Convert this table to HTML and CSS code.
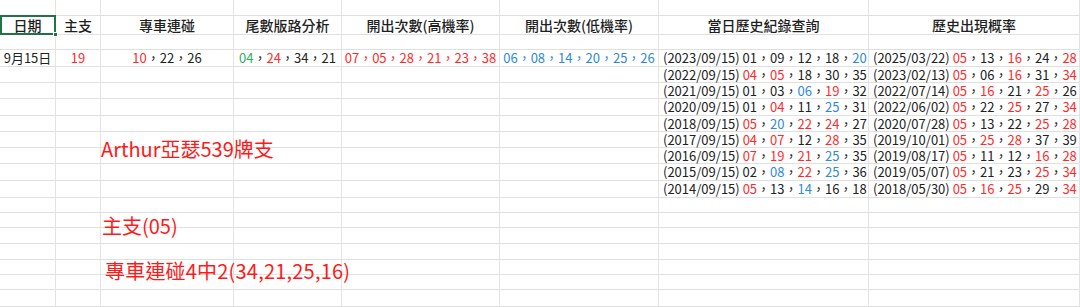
FILE: index.html
```html
<!DOCTYPE html>
<html lang="zh-Hant">
<head>
<meta charset="utf-8">
<title>Arthur亞瑟539牌支</title>
<link rel="stylesheet" href="styles.css">
</head>
<body>
<div class="sheet">
  <div class="row h16"><div></div><div></div><div></div><div></div><div></div><div></div><div></div><div></div></div>
  <div class="row h19 head">
    <div class="c selected">日期</div><div class="c">主支</div><div class="c">專車連碰</div><div class="c">尾數版路分析</div><div class="c">開出次數(高機率)</div><div class="c">開出次數(低機率)</div><div class="c">當日歷史紀錄查詢</div><div class="c">歷史出現概率</div>
  </div>
  <div class="row h15"><div></div><div></div><div></div><div></div><div></div><div></div><div></div><div></div></div>
  <div class="row h17">
    <div class="c">9月15日</div>
    <div class="c r">19</div>
    <div class="c"><span class="r">10</span>，22，26</div>
    <div class="c"><span class="g">04</span>，<span class="r">24</span>，34，21</div>
    <div class="c r">07，05，28，21，23，38</div>
    <div class="c b">06，08，14，20，25，26</div>
    <div class="l">(2023/09/15) 01，09，12，18，<span class="b">20</span></div>
    <div class="l">(2025/03/22) <span class="r">05</span>，13，<span class="r">16</span>，24，<span class="r">28</span></div>
  </div>
  <div class="row h16"><div></div><div></div><div></div><div></div><div></div><div></div>
    <div class="l">(2022/09/15) <span class="r">04</span>，<span class="r">05</span>，18，30，35</div>
    <div class="l">(2023/02/13) <span class="r">05</span>，06，<span class="r">16</span>，31，<span class="r">34</span></div>
  </div>
  <div class="row h16"><div></div><div></div><div></div><div></div><div></div><div></div>
    <div class="l">(2021/09/15) 01，03，<span class="b">06</span>，<span class="r">19</span>，32</div>
    <div class="l">(2022/07/14) <span class="r">05</span>，<span class="r">16</span>，21，<span class="r">25</span>，26</div>
  </div>
  <div class="row h17"><div></div><div></div><div></div><div></div><div></div><div></div>
    <div class="l">(2020/09/15) 01，<span class="r">04</span>，11，<span class="b">25</span>，31</div>
    <div class="l">(2022/06/02) <span class="r">05</span>，22，<span class="r">25</span>，27，<span class="r">34</span></div>
  </div>
  <div class="row h16"><div></div><div></div><div></div><div></div><div></div><div></div>
    <div class="l">(2018/09/15) <span class="r">05</span>，<span class="b">20</span>，<span class="r">22</span>，<span class="r">24</span>，27</div>
    <div class="l">(2020/07/28) <span class="r">05</span>，13，22，<span class="r">25</span>，<span class="r">28</span></div>
  </div>
  <div class="row h16"><div></div><div></div><div></div><div></div><div></div><div></div>
    <div class="l">(2017/09/15) <span class="r">04</span>，<span class="r">07</span>，12，<span class="r">28</span>，35</div>
    <div class="l">(2019/10/01) <span class="r">05</span>，<span class="r">25</span>，<span class="r">28</span>，37，39</div>
  </div>
  <div class="row h16"><div></div><div></div><div></div><div></div><div></div><div></div>
    <div class="l">(2016/09/15) <span class="r">07</span>，<span class="r">19</span>，<span class="r">21</span>，<span class="b">25</span>，35</div>
    <div class="l">(2019/08/17) <span class="r">05</span>，11，12，<span class="r">16</span>，<span class="r">28</span></div>
  </div>
  <div class="row h17"><div></div><div></div><div></div><div></div><div></div><div></div>
    <div class="l">(2015/09/15) 02，<span class="b">08</span>，<span class="r">22</span>，<span class="b">25</span>，36</div>
    <div class="l">(2019/05/07) <span class="r">05</span>，21，23，<span class="r">25</span>，<span class="r">34</span></div>
  </div>
  <div class="row h17"><div></div><div></div><div></div><div></div><div></div><div></div>
    <div class="l">(2014/09/15) <span class="r">05</span>，13，<span class="b">14</span>，16，18</div>
    <div class="l">(2018/05/30) <span class="r">05</span>，<span class="r">16</span>，<span class="r">25</span>，29，<span class="r">34</span></div>
  </div>
  <div class="row h15"><div></div><div></div><div></div><div></div><div></div><div></div><div></div><div></div></div>
  <div class="row h15"><div></div><div></div><div></div><div></div><div></div><div></div><div></div><div></div></div>
  <div class="row h16"><div></div><div></div><div></div><div></div><div></div><div></div><div></div><div></div></div>
  <div class="row h16"><div></div><div></div><div></div><div></div><div></div><div></div><div></div><div></div></div>
  <div class="row h15"><div></div><div></div><div></div><div></div><div></div><div></div><div></div><div></div></div>
  <div class="row h15"><div></div><div></div><div></div><div></div><div></div><div></div><div></div><div></div></div>
  <div class="row h17"><div></div><div></div><div></div><div></div><div></div><div></div><div></div><div></div></div>

  <div class="note note-title">Arthur亞瑟539牌支</div>
  <div class="note note-main">主支(05)</div>
  <div class="note note-car">專車連碰4中2(34,21,25,16)</div>
</div>
</body>
</html>
```

FILE: styles.css
```css
html, body {
  margin: 0;
  padding: 0;
  background: #ffffff;
}

body {
  font-family: "Noto Sans CJK TC", "Noto Sans", sans-serif;
  color: #222222;
  overflow: hidden;
}

.sheet {
  position: relative;
  width: 1080px;
  height: 307px;
  overflow: hidden;
}

.row {
  display: grid;
  grid-template-columns: 56px 45px 133px 108px 158px 159px 210px 211px;
}

.row > div {
  box-sizing: border-box;
  border-right: 1px solid #e4e4e4;
  border-bottom: 1px solid #e0e0e0;
  font-size: 13px;
  white-space: nowrap;
  overflow: visible;
}

.h15 { height: 15px; line-height: 14px; }
.h16 { height: 16px; line-height: 15px; }
.h17 { height: 17px; line-height: 16px; }
.h19 { height: 19px; line-height: 18px; }

.c {
  text-align: center;
}

.l {
  text-align: left;
  padding-left: 4px;
}

.head > div {
  font-size: 14px;
  font-weight: 500;
  color: #1f1f1f;
}

.selected {
  position: relative;
}

.selected::before {
  content: "";
  position: absolute;
  left: 0;
  top: -1px;
  right: -1px;
  bottom: -1px;
  border: 2px solid #217346;
  box-sizing: border-box;
}

.selected::after {
  content: "";
  position: absolute;
  right: -3px;
  bottom: -3px;
  width: 5px;
  height: 5px;
  background: #217346;
  border: 1px solid #ffffff;
  box-sizing: border-box;
}

.r { color: #ff2b2b; }
.b { color: #2f8ad6; }
.g { color: #2fae62; }

.note {
  position: absolute;
  color: #ff1a1a;
  font-size: 20px;
  line-height: 24px;
  white-space: nowrap;
}

.note-title { left: 101px; top: 137px; }
.note-main { left: 102px; top: 214px; }
.note-car { left: 105px; top: 259px; letter-spacing: 0.2px; }
```
